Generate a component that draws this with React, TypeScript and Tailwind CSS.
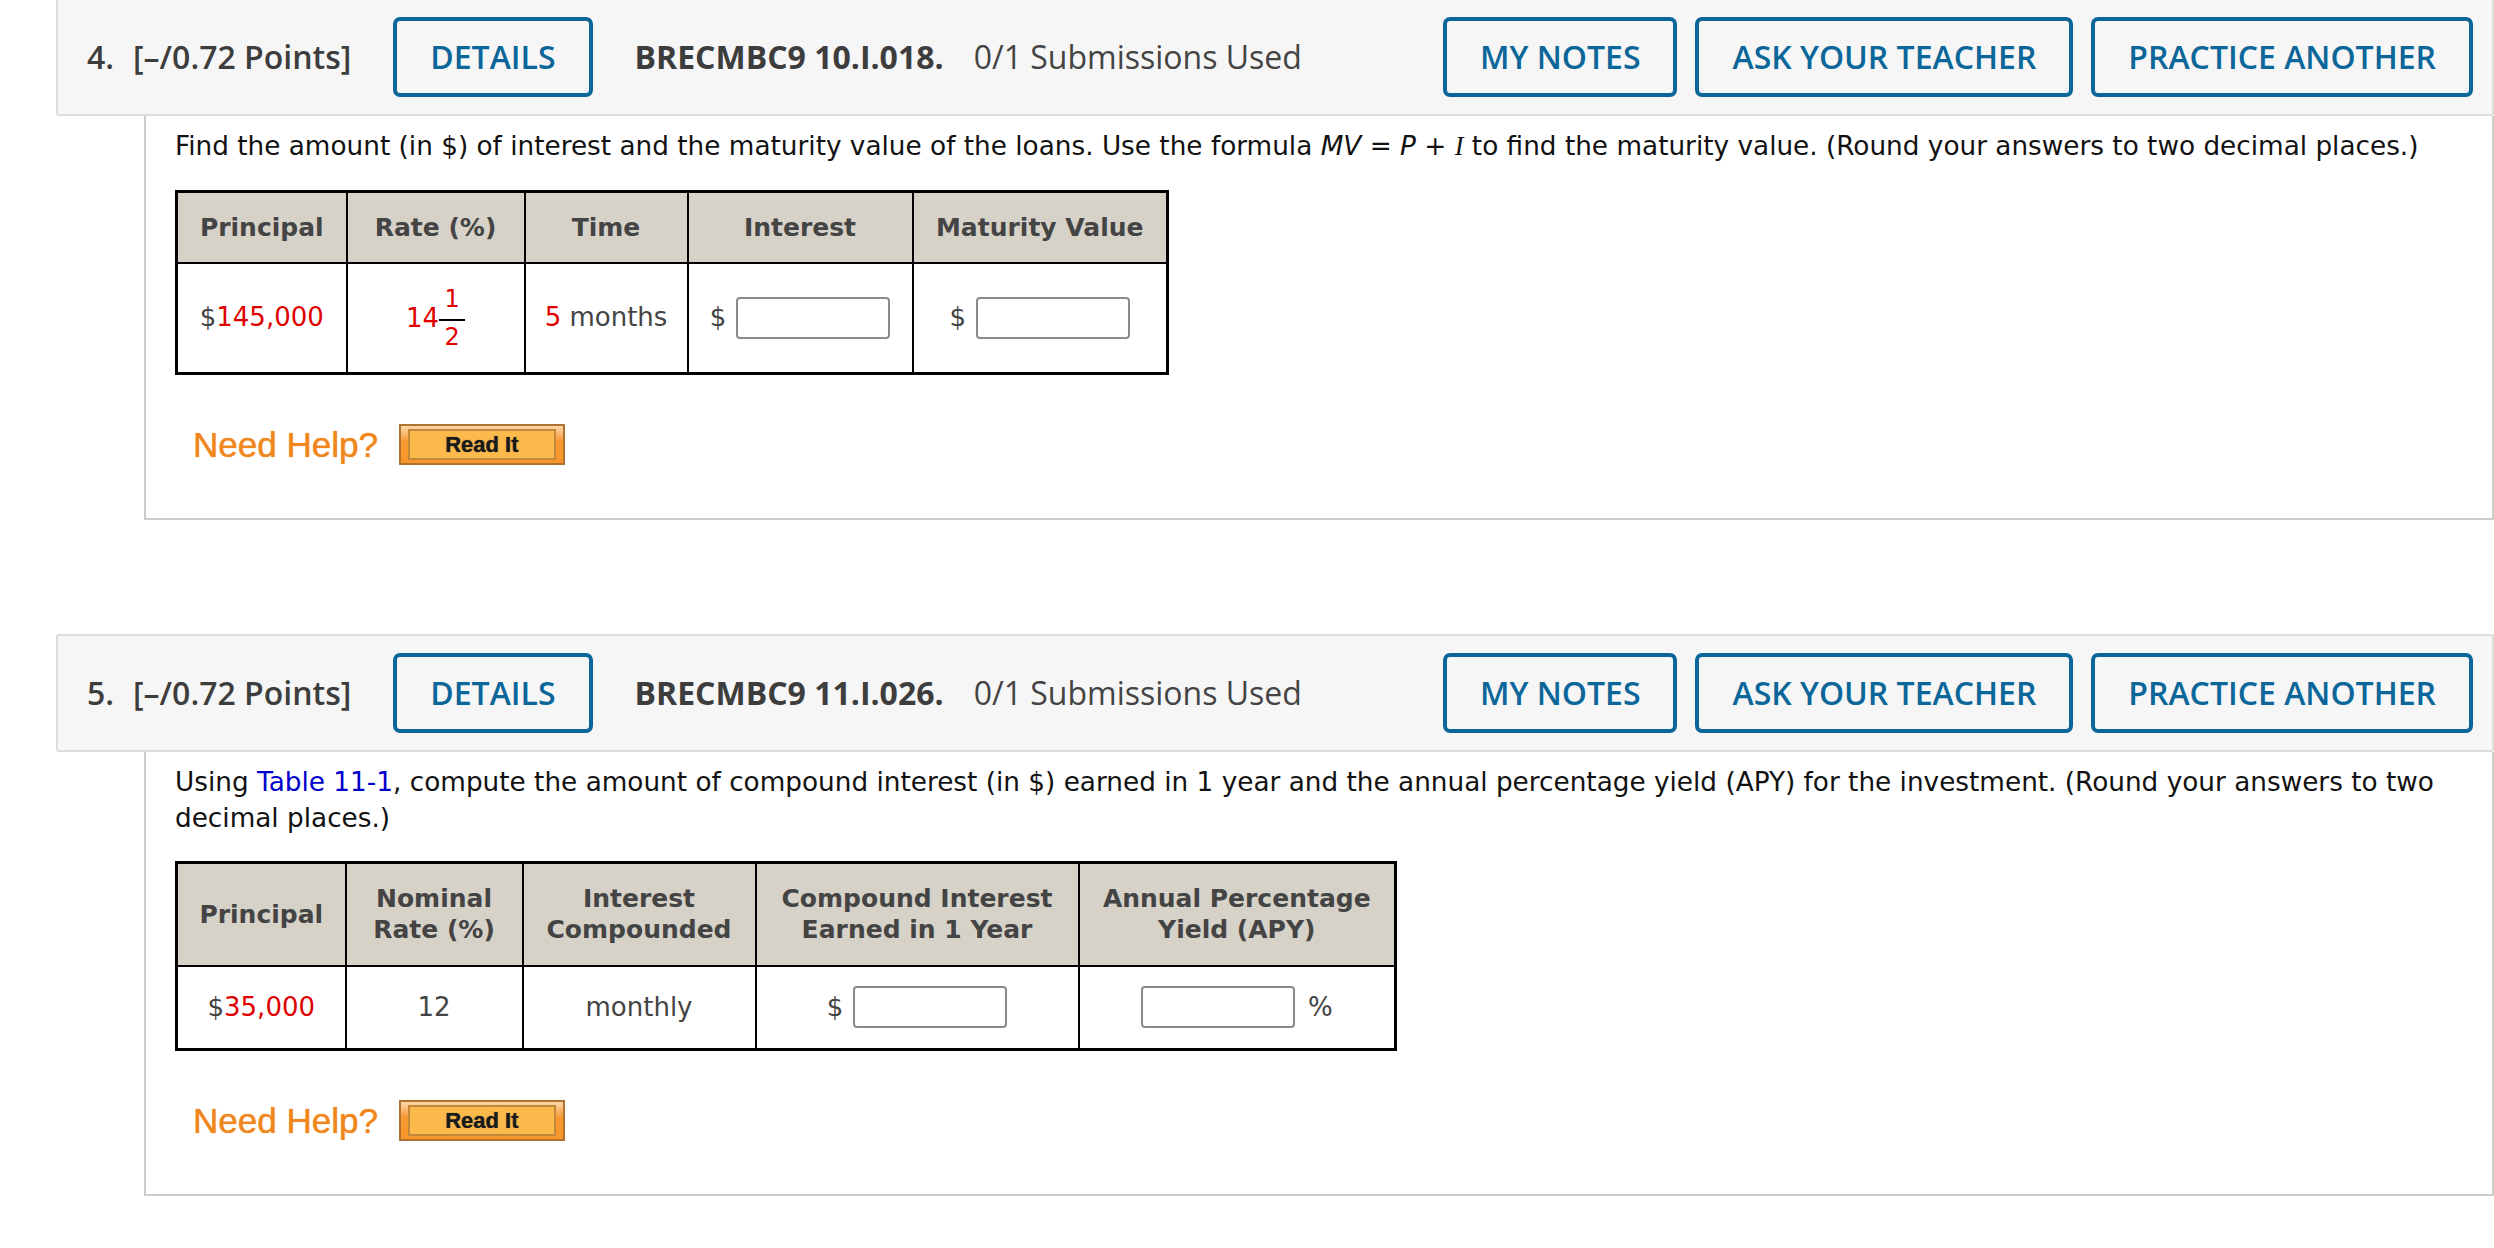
import React from "react";

const HeaderBtn = ({ children }: { children: React.ReactNode }) => (
  <div className="h-[80px] px-[33px] border-[4px] border-[#0b6699] rounded-[7px] flex items-center text-[#0b6699] text-[32px] font-semibold whitespace-nowrap">
    {children}
  </div>
);

const Header = ({ num, code }: { num: string; code: string }) => (
  <div className="ml-[56px] h-[118px] border-2 border-[#dddddd] rounded-[3px] bg-[#f6f6f6] flex items-center pl-[29px] pr-[19px] font-['Open_Sans',sans-serif] text-[32px] text-[#3d3d3d]">
    <span className="font-semibold">{num}</span>
    <span className="font-semibold ml-[19px] whitespace-nowrap">[–/0.72 Points]</span>
    <div className="ml-[42px]">
      <HeaderBtn>DETAILS</HeaderBtn>
    </div>
    <span className="font-bold ml-[42px] whitespace-nowrap">{code}</span>
    <span className="ml-[30px] text-[#444] whitespace-nowrap">0/1 Submissions Used</span>
    <div className="ml-auto flex gap-[18px]">
      <HeaderBtn>MY NOTES</HeaderBtn>
      <HeaderBtn>ASK YOUR TEACHER</HeaderBtn>
      <HeaderBtn>PRACTICE ANOTHER</HeaderBtn>
    </div>
  </div>
);

const AnswerBox = () => (
  <div className="w-[154px] h-[42px] border-2 border-[#8a8a8a] rounded-[4px] bg-white" />
);

const NeedHelp = () => (
  <div className="flex items-center pl-[18px]">
    <span className="font-['Liberation_Sans',Arial,sans-serif] text-[35px] text-[#f0861e] leading-none [text-shadow:0_0_1px_#f0861e]">
      Need Help?
    </span>
    <div className="ml-[21px] w-[166px] h-[41px] border-2 border-[#b0722f] bg-linear-to-b from-[#fcd8a8] via-[#f79a30] via-40% to-[#f7952a] px-[7px] py-[3px]">
      <div className="h-full border-2 border-[#c4883d] bg-[#fdba4c] flex items-center justify-center font-['Liberation_Sans',Arial,sans-serif] font-bold text-[22px] text-[#1a1a1a] leading-none [text-shadow:0_0_1px_#333]">
        Read It
      </div>
    </div>
  </div>
);

const th =
  "border-2 border-black bg-[#d6d2c8] font-bold text-[#444] text-center align-middle p-0";
const td = "border-2 border-black text-center align-middle text-[#444] p-0";

export default function App() {
  return (
    <div className="w-full min-h-screen bg-white overflow-hidden font-['DejaVu_Sans',Verdana,sans-serif]">
      <div className="-mt-[2px]">
        {/* Question 4 */}
        <Header num="4." code="BRECMBC9 10.I.018." />
        <div className="ml-[144px] border-l-2 border-r-2 border-b-2 border-[#cccccc] pl-[29px] pr-[30px] pt-[12px] pb-[53px]">
          <p className="text-[26.3px] leading-[36px] text-[#111]">
            Find the amount (in $) of interest and the maturity value of the loans. Use the formula{" "}
            <i>MV</i> = <i>P</i> + <i className="font-['Liberation_Serif',serif]">I</i> to find the
            maturity value. (Round your answers to two decimal places.)
          </p>
          <table className="mt-[25px] border-collapse border-[3px] border-black table-fixed text-[25px]">
            <colgroup>
              <col className="w-[170px]" />
              <col className="w-[178px]" />
              <col className="w-[163px]" />
              <col className="w-[225px]" />
              <col className="w-[255px]" />
            </colgroup>
            <thead>
              <tr className="h-[71px]">
                <th className={th}>Principal</th>
                <th className={th}>Rate (%)</th>
                <th className={th}>Time</th>
                <th className={th}>Interest</th>
                <th className={th}>Maturity Value</th>
              </tr>
            </thead>
            <tbody>
              <tr className="h-[111px] text-[26px]">
                <td className={td}>
                  $<span className="text-[#e00000]">145,000</span>
                </td>
                <td className={td}>
                  <div className="flex items-center justify-center text-[#e00000]">
                    <span className="leading-[30px]">14</span>
                    <div className="flex flex-col items-center">
                      <span className="block h-[28px] text-[24px] leading-[28px]">1</span>
                      <span className="block h-[2px] w-[26px] bg-black mt-[6px]" />
                      <span className="block h-[28px] text-[24px] leading-[28px] mt-[2px]">2</span>
                    </div>
                  </div>
                </td>
                <td className={td}>
                  <span className="text-[#e00000]">5</span> months
                </td>
                <td className={td}>
                  <div className="flex items-center justify-center gap-[10px]">
                    <span>$</span>
                    <AnswerBox />
                  </div>
                </td>
                <td className={td}>
                  <div className="flex items-center justify-center gap-[10px]">
                    <span>$</span>
                    <AnswerBox />
                  </div>
                </td>
              </tr>
            </tbody>
          </table>
          <div className="mt-[49px]">
            <NeedHelp />
          </div>
        </div>

        <div className="h-[114px]" />

        {/* Question 5 */}
        <Header num="5." code="BRECMBC9 11.I.026." />
        <div className="ml-[144px] border-l-2 border-r-2 border-b-2 border-[#cccccc] pl-[29px] pr-[30px] pt-[12px] pb-[53px]">
          <p className="text-[26.3px] leading-[36px] text-[#111]">
            Using <span className="text-[#0000cc]">Table 11-1</span>, compute the amount of compound
            interest (in $) earned in 1 year and the annual percentage yield (APY) for the
            investment. (Round your answers to two decimal places.)
          </p>
          <table className="mt-[25px] border-collapse border-[3px] border-black table-fixed text-[25px]">
            <colgroup>
              <col className="w-[169px]" />
              <col className="w-[177px]" />
              <col className="w-[233px]" />
              <col className="w-[323px]" />
              <col className="w-[317px]" />
            </colgroup>
            <thead>
              <tr className="h-[103px] leading-[31px]">
                <th className={th}>Principal</th>
                <th className={th}>
                  Nominal
                  <br />
                  Rate (%)
                </th>
                <th className={th}>
                  Interest
                  <br />
                  Compounded
                </th>
                <th className={th}>
                  Compound Interest
                  <br />
                  Earned in 1 Year
                </th>
                <th className={th}>
                  Annual Percentage
                  <br />
                  Yield (APY)
                </th>
              </tr>
            </thead>
            <tbody>
              <tr className="h-[84px] text-[26px]">
                <td className={td}>
                  $<span className="text-[#e00000]">35,000</span>
                </td>
                <td className={td}>12</td>
                <td className={td}>monthly</td>
                <td className={td}>
                  <div className="flex items-center justify-center gap-[10px]">
                    <span>$</span>
                    <AnswerBox />
                  </div>
                </td>
                <td className={td}>
                  <div className="flex items-center justify-center gap-[13px]">
                    <AnswerBox />
                    <span>%</span>
                  </div>
                </td>
              </tr>
            </tbody>
          </table>
          <div className="mt-[49px]">
            <NeedHelp />
          </div>
        </div>
      </div>
    </div>
  );
}
